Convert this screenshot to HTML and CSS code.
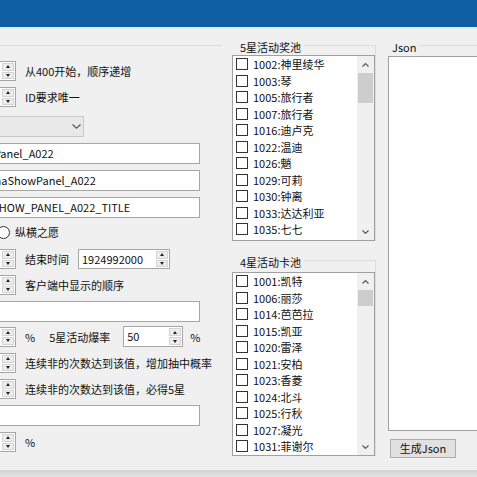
FILE: index.html
```html
<!DOCTYPE html>
<html lang="zh-CN">
<head>
<meta charset="utf-8">
<title>Gacha</title>
<link rel="stylesheet" href="styles.css">
</head>
<body>
<div class="window">
  <div class="titlebar"></div>
  <div class="titleline"></div>
  <div class="client">
    <div class="left">
      <div class="lgroup">
        <div class="row">
          <div class="num"><div class="val"></div><div class="spin"><span class="up"></span><span class="dn"></span></div></div>
          <span class="lbl">从400开始，顺序递增</span>
        </div>
        <div class="row">
          <div class="num"><div class="val"></div><div class="spin"><span class="up"></span><span class="dn"></span></div></div>
          <span class="lbl">ID要求唯一</span>
        </div>
        <div class="combo">
          <svg width="9" height="5" viewBox="0 0 9 5"><path d="M0.5 0.5 L4.5 4.2 L8.5 0.5" fill="none" stroke="#555" stroke-width="1.1"/></svg>
        </div>
        <div class="tb">GachaShowPanel_A022</div>
        <div class="tb">UI_Tab_GachaShowPanel_A022</div>
        <div class="tb">UI_GACHA_SHOW_PANEL_A022_TITLE</div>
        <div class="radio-row">
          <span class="radio"></span>
          <span class="rlbl">纵横之愿</span>
        </div>
        <div class="row push3">
          <div class="num"><div class="val"></div><div class="spin"><span class="up"></span><span class="dn"></span></div></div>
          <span class="lbl">结束时间</span>
          <div class="num num-wide"><div class="val">1924992000</div><div class="spin"><span class="up"></span><span class="dn"></span></div></div>
        </div>
        <div class="row">
          <div class="num"><div class="val"></div><div class="spin"><span class="up"></span><span class="dn"></span></div></div>
          <span class="lbl">客户端中显示的顺序</span>
        </div>
        <div class="tb"></div>
        <div class="row pull2">
          <div class="num"><div class="val"></div><div class="spin"><span class="up"></span><span class="dn"></span></div></div>
          <span class="lbl">%</span>
          <span class="lbl lbl-gap">5星活动爆率</span>
          <div class="num num-rate"><div class="val">50</div><div class="spin"><span class="up"></span><span class="dn"></span></div></div>
          <span class="lbl lbl-pct">%</span>
        </div>
        <div class="row">
          <div class="num"><div class="val"></div><div class="spin"><span class="up"></span><span class="dn"></span></div></div>
          <span class="lbl">连续非的次数达到该值，增加抽中概率</span>
        </div>
        <div class="row">
          <div class="num"><div class="val"></div><div class="spin"><span class="up"></span><span class="dn"></span></div></div>
          <span class="lbl">连续非的次数达到该值，必得5星</span>
        </div>
        <div class="tb"></div>
        <div class="row">
          <div class="num"><div class="val"></div><div class="spin"><span class="up"></span><span class="dn"></span></div></div>
          <span class="lbl">%</span>
        </div>
      </div>
    </div>

    <div class="mid">
      <div class="mgroup">
        <div class="ghead"><span class="glabel">5星活动奖池</span><span class="gline"></span></div>
        <div class="lb lb1">
          <div class="items">
            <div class="item"><span class="cb"></span>1002:神里绫华</div>
            <div class="item"><span class="cb"></span>1003:琴</div>
            <div class="item"><span class="cb"></span>1005:旅行者</div>
            <div class="item"><span class="cb"></span>1007:旅行者</div>
            <div class="item"><span class="cb"></span>1016:迪卢克</div>
            <div class="item"><span class="cb"></span>1022:温迪</div>
            <div class="item"><span class="cb"></span>1026:魈</div>
            <div class="item"><span class="cb"></span>1029:可莉</div>
            <div class="item"><span class="cb"></span>1030:钟离</div>
            <div class="item"><span class="cb"></span>1033:达达利亚</div>
            <div class="item"><span class="cb"></span>1035:七七</div>
          </div>
          <div class="sb">
            <div class="arrow"><svg width="7" height="4" viewBox="0 0 7 4"><path d="M0.5 3.5 L3.5 0.6 L6.5 3.5" fill="none" stroke="#505050" stroke-width="1.1"/></svg></div>
            <div class="track"><div class="thumb thumb1"></div></div>
            <div class="arrow"><svg width="7" height="4" viewBox="0 0 7 4"><path d="M0.5 0.5 L3.5 3.4 L6.5 0.5" fill="none" stroke="#505050" stroke-width="1.1"/></svg></div>
          </div>
        </div>
      </div>
      <div class="mgroup mgroup2">
        <div class="ghead ghead2"><span class="glabel">4星活动卡池</span><span class="gline"></span></div>
        <div class="lb lb2">
          <div class="items">
            <div class="item"><span class="cb"></span>1001:凯特</div>
            <div class="item"><span class="cb"></span>1006:丽莎</div>
            <div class="item"><span class="cb"></span>1014:芭芭拉</div>
            <div class="item"><span class="cb"></span>1015:凯亚</div>
            <div class="item"><span class="cb"></span>1020:雷泽</div>
            <div class="item"><span class="cb"></span>1021:安柏</div>
            <div class="item"><span class="cb"></span>1023:香菱</div>
            <div class="item"><span class="cb"></span>1024:北斗</div>
            <div class="item"><span class="cb"></span>1025:行秋</div>
            <div class="item"><span class="cb"></span>1027:凝光</div>
            <div class="item"><span class="cb"></span>1031:菲谢尔</div>
          </div>
          <div class="sb">
            <div class="arrow"><svg width="7" height="4" viewBox="0 0 7 4"><path d="M0.5 3.5 L3.5 0.6 L6.5 3.5" fill="none" stroke="#505050" stroke-width="1.1"/></svg></div>
            <div class="track"><div class="thumb thumb2"></div></div>
            <div class="arrow"><svg width="7" height="4" viewBox="0 0 7 4"><path d="M0.5 0.5 L3.5 3.4 L6.5 0.5" fill="none" stroke="#505050" stroke-width="1.1"/></svg></div>
          </div>
        </div>
      </div>
    </div>

    <div class="right">
      <div class="ghead"><span class="glabel jlabel">Json</span><span class="gline"></span></div>
      <div class="json"></div>
      <button class="btn" type="button">生成Json</button>
    </div>
  </div>
  <div class="bottom"></div>
</div>
</body>
</html>
```

FILE: styles.css
```css
* { box-sizing: border-box; }
html, body { margin: 0; padding: 0; }
body {
  width: 477px;
  height: 477px;
  overflow: hidden;
  background: #f0f0f0;
  font-family: "Noto Sans CJK SC", "Noto Sans", sans-serif;
  font-size: 11px;
  color: #111;
}
.window { display: flex; flex-direction: column; height: 477px; }
.titlebar { height: 27px; background: #0f5fa4; flex: none; }
.titleline { height: 2px; background: #e2ecf5; flex: none; }
.client {
  flex: 1;
  min-height: 0;
  display: grid;
  grid-template-columns: 229px 152px 1fr;
}
.bottom { height: 7px; flex: none; background: linear-gradient(#d2d2d2, #e4e4e4); }

/* left column */
.left { padding-top: 16px; min-width: 0; }
.lgroup {
  width: 222px;
  border-top: 1px solid #dadada;
  padding-top: 15px;
  display: flex;
  flex-direction: column;
  align-items: flex-start;
  gap: 6px;
}
.row { display: flex; align-items: center; height: 20px; white-space: nowrap; }
.push3 { margin-top: 3px; }
.pull2 { margin-top: -2px; height: 21px; }
.num {
  margin-left: -60px;
  width: 76px;
  height: 20px;
  border: 1px solid #a6a6a6;
  background: #fff;
  display: flex;
  flex: none;
}
.num .val { flex: 1; padding-left: 3px; line-height: 18px; }
.num-wide { margin-left: 9px; width: 92px; }
.num-rate { margin-left: 13px; width: 60px; height: 21px; }
.num-rate .val { line-height: 19px; }
.spin {
  width: 12px;
  margin: 1px 1px 1px 0;
  display: flex;
  flex-direction: column;
  gap: 1px;
}
.spin span {
  flex: 1;
  background: #ececec;
  border: 1px solid #d4d4d4;
  display: flex;
  align-items: center;
  justify-content: center;
}
.spin .up::after {
  content: "";
  border-left: 2.5px solid transparent;
  border-right: 2.5px solid transparent;
  border-bottom: 3px solid #222;
}
.spin .dn::after {
  content: "";
  border-left: 2.5px solid transparent;
  border-right: 2.5px solid transparent;
  border-top: 3px solid #222;
}
.lbl { margin-left: 9px; }
.lbl-gap { margin-left: 14px; }
.lbl-pct { margin-left: 7px; }
.combo {
  margin-top: 3px;
  margin-left: -60px;
  width: 144px;
  height: 21px;
  border: 1px solid #cacaca;
  background: #e8e8e8;
  display: flex;
  align-items: center;
  justify-content: flex-end;
  padding-right: 2px;
}
.tb {
  margin-left: -71px;
  width: 271px;
  height: 21px;
  border: 1px solid #a6a6a6;
  background: #fff;
  padding-left: 3px;
  line-height: 19px;
  white-space: nowrap;
  overflow: hidden;
}
.radio-row { display: flex; align-items: center; height: 16px; margin-left: -3px; }
.radio {
  width: 13px;
  height: 13px;
  border: 1px solid #333;
  border-radius: 50%;
  background: #fff;
}
.rlbl { margin-left: 5px; }

/* middle column */
.mid { padding-top: 16px; padding-left: 3px; display: flex; flex-direction: column; }
.mgroup { width: 144px; border-right: 1px solid #dcdcdc; }
.mgroup2 { margin-top: 19px; }
.ghead { height: 10px; display: flex; align-items: flex-start; }
.ghead2 { height: 12px; }
.glabel {
  margin-top: -5px;
  margin-left: 8px;
  padding-right: 3px;
  line-height: 14px;
  white-space: nowrap;
}
.gline { flex: 1; border-top: 1px solid #dcdcdc; }
.lb {
  width: 143px;
  border: 1px solid #a0a0a0;
  background: #fff;
  display: flex;
  overflow: hidden;
}
.lb1 { height: 186px; }
.lb2 { height: 184px; }
.items { flex: 1; min-width: 0; }
.item {
  height: 16.5px;
  display: flex;
  align-items: center;
  padding-left: 3px;
  white-space: nowrap;
}
.cb {
  width: 12px;
  height: 12px;
  border: 1px solid #333;
  background: #fff;
  margin-right: 5px;
  flex: none;
}
.sb { width: 17px; background: #f0f0f0; display: flex; flex-direction: column; flex: none; }
.arrow { height: 17px; display: flex; align-items: center; justify-content: center; flex: none; }
.track { flex: 1; padding: 0 1px; }
.thumb { background: #cdcdcd; }
.thumb1 { height: 30px; }
.thumb2 { height: 16px; }

/* right column */
.right { padding-top: 16px; padding-left: 7px; min-width: 0; }
.jlabel { margin-left: 4px; }
.json {
  margin-top: 1px;
  width: 110px;
  height: 375px;
  border: 1px solid #a0a0a0;
  background: #fff;
}
.btn {
  display: block;
  margin-top: 8px;
  margin-left: 2px;
  width: 66px;
  height: 19px;
  padding: 0;
  border: 1px solid #adadad;
  background: #e1e1e1;
  font-family: "Noto Sans CJK SC", "Noto Sans", sans-serif;
  font-size: 11px;
  line-height: 17px;
  color: #111;
}
```
